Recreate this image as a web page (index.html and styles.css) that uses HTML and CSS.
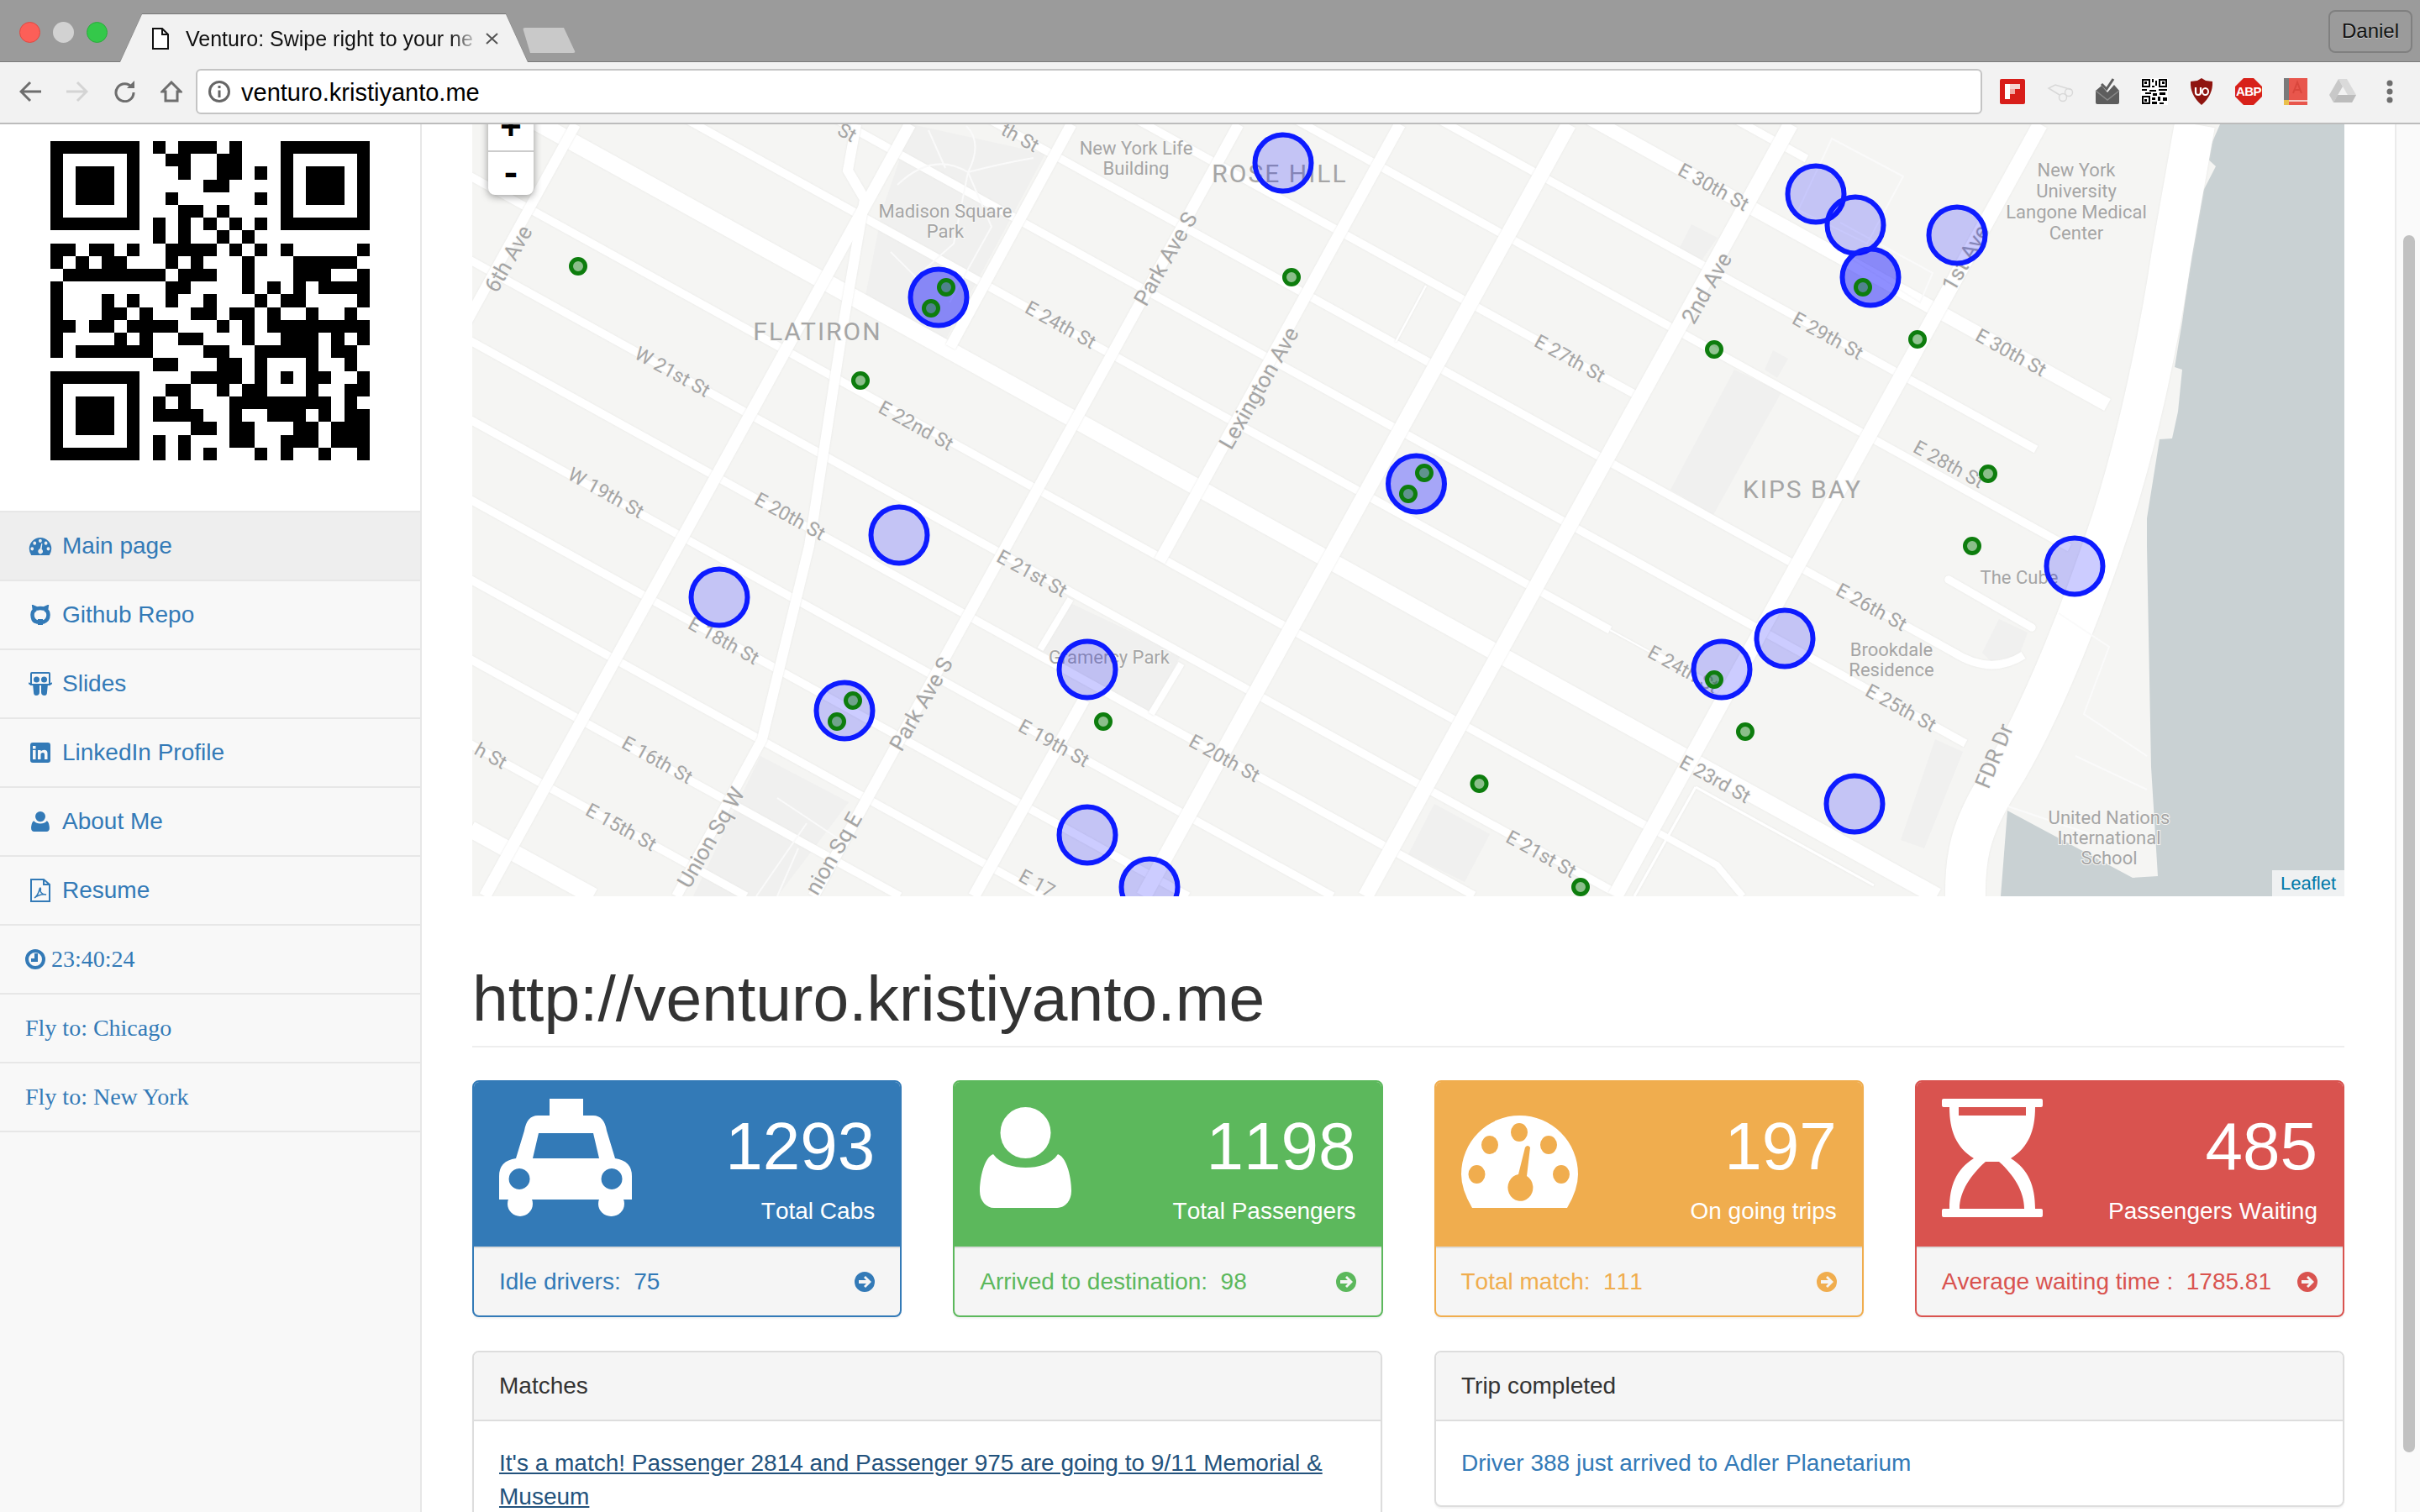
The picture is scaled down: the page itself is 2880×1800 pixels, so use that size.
FILE: index.html
```html
<!DOCTYPE html>
<html lang="en">
<head>
	<meta charset="UTF-8">
	<title>Venturo: Swipe right to your next ride</title>
	<link rel="stylesheet" href="styles.css">
</head>
<body>
<svg class="defs" width="0" height="0">
	<symbol id="i-gauge" viewBox="0 0 139 110">
		<path fill-rule="evenodd" d="M13 110 Q0 88 0 70 A69.500 70 0 0 1 139 70 Q139 88 126 110 Z M59 20 a10 11 0 1 0 20 0 a10 11 0 1 0 -20 0 Z M24 35 a10 11 0 1 0 20 0 a10 11 0 1 0 -20 0 Z M94 35 a10 11 0 1 0 20 0 a10 11 0 1 0 -20 0 Z M8.500 70 a10 11 0 1 0 20 0 a10 11 0 1 0 -20 0 Z M109 70 a10 11 0 1 0 20 0 a10 11 0 1 0 -20 0 Z M76 38 Q79 34 82 38 L78 72 A15 16 0 1 1 68 70 Z"/>
	</symbol>
	<symbol id="i-user" viewBox="0 0 109 120">
		<ellipse cx="54.500" cy="30.500" rx="30" ry="30.500"/>
		<path d="M16 56 C25 68 40 72 54.500 72 C70 72 85 68 93 56 C104 60 109 85 109 100 C109 112 101 120 92 120 H17 C8 120 0 112 0 100 C0 85 5 60 16 56 Z"/>
	</symbol>
	<symbol id="i-arrow" viewBox="0 0 24 24">
		<path fill-rule="evenodd" d="M12 0 A12 12 0 1 1 12 24 A12 12 0 1 1 12 0 Z M13 5 L11 7 L14 10 H5 V14 H14 L11 17 L13 19 L20 12 Z"/>
	</symbol>
</svg>

<header class="tabstrip">
	<div class="lights">
		<span class="light light-red"></span>
		<span class="light light-grey"></span>
		<span class="light light-green"></span>
	</div>
	<div class="tab-edge">
		<div class="tab">
			<svg class="tab-doc" viewBox="0 0 20 26"><path d="M1 1 H12 L19 8 V25 H1 Z M12 1 V8 H19"/></svg>
			<span class="tab-title">Venturo: Swipe right to your ne</span>
			<svg class="tab-close" viewBox="0 0 15 14"><path d="M1 1 L14 13 M14 1 L1 13"/></svg>
		</div>
	</div>
	<div class="newtab"></div>
	<div class="profile">Daniel</div>
</header>

<div class="toolbar">
	<div class="nav-btns">
		<svg class="nav-btn" viewBox="0 0 26 26"><path d="M13 2 L2 13 L13 24 M2 13 H26"/></svg>
		<svg class="nav-btn nav-off" viewBox="0 0 26 26"><path d="M13 2 L24 13 L13 24 M24 13 H0"/></svg>
		<svg class="nav-btn" viewBox="0 0 26 26"><path d="M22 8 A10.500 10.500 0 1 0 24 14"/><path class="solid" d="M16 9 H25 V0 Z"/></svg>
		<svg class="nav-btn" viewBox="0 0 26 26"><path d="M13 2 L24 13 H20 V24 H6 V13 H2 Z"/></svg>
	</div>
	<div class="omnibox">
		<svg class="info" viewBox="0 0 26 26"><circle cx="13" cy="13" r="11.500"/><path d="M13 11.500 V20 M13 6 V9"/></svg>
		<span class="url">venturo.kristiyanto.me</span>
	</div>
	<div class="extensions">
		<svg class="ext" viewBox="0 0 32 32"><rect y="1" width="30" height="30" rx="2" fill="#d81e1a"/><rect x="6" y="7" width="6" height="18" fill="#fff"/><rect x="12" y="7" width="12" height="6" fill="#f5d5d3"/><rect x="12" y="13" width="6" height="6" fill="#f0aaa6"/></svg>
		<svg class="ext" viewBox="0 0 32 32"><g fill="none" stroke="#d8d8d8" stroke-width="1.500"><circle cx="19" cy="23" r="4.500"/><circle cx="26" cy="17" r="4.500"/><path d="M15 20 L2 12 L10 8 L30 14 M22 20 L23 19"/></g></svg>
		<svg class="ext" viewBox="0 0 32 32"><path fill="#5d5d5d" d="M2 15 L9 9 L16 17 L24 8 L30 15 V29 Q30 31 28 31 H4 Q2 31 2 29 Z"/><path fill="none" stroke="#8a8a8a" stroke-width="1.500" d="M2 15 L16 26 L30 15"/><path fill="none" stroke="#5d5d5d" stroke-width="3" d="M9 7 L15 13 L23 1"/></svg>
		<svg class="ext" viewBox="0 0 30 30" shape-rendering="crispEdges"><rect width="30" height="30" fill="#fff"/><path d="M1 1 h9 v9 h-9 z M3 3 v5 h5 v-5 z M20 1 h9 v9 h-9 z M22 3 v5 h5 v-5 z M1 20 h9 v9 h-9 z M3 22 v5 h5 v-5 z" fill-rule="evenodd"/><path d="M4 4 h3 v3 h-3 z M23 4 h3 v3 h-3 z M4 23 h3 v3 h-3 z M12 1 h2 v4 h-2 z M16 3 h2 v5 h-2 z M12 8 h3 v2 h-3 z M1 12 h6 v2 h-6 z M9 13 h8 v2 h-8 z M20 12 h9 v2 h-9 z M5 16 h6 v2 h-6 z M13 17 h5 v3 h-5 z M21 16 h6 v3 h-6 z M12 22 h4 v2 h-4 z M19 21 h3 v4 h-3 z M24 22 h5 v3 h-5 z M12 26 h6 v3 h-6 z M21 27 h4 v2 h-4 z"/></svg>
		<svg class="ext" viewBox="0 0 32 32"><path fill="#8f1510" d="M16 0 L21 3 L29 4 Q30 20 16 32 Q2 20 3 4 L11 3 Z"/><path fill="none" stroke="#fff" stroke-width="2.200" d="M9 11 V17 Q9 20 12 20 Q15 20 15 17 V11"/><ellipse cx="20.500" cy="16" rx="3.500" ry="4" fill="none" stroke="#fff" stroke-width="2"/></svg>
		<svg class="ext" viewBox="0 0 32 32"><path fill="#d8211a" d="M10 0 H22 L32 10 V22 L22 32 H10 L0 22 V10 Z"/><text class="abp" x="16" y="21">ABP</text></svg>
		<svg class="ext" viewBox="0 0 32 32"><rect x="2" width="28" height="32" fill="#e8564c"/><rect x="2" width="6" height="32" fill="#7a7a7a"/><rect x="8" y="26" width="22" height="2" fill="#f6c9c4"/><rect x="2" y="26" width="6" height="6" fill="#e9c04c"/><path d="M13 18 L18 5 L23 18 M15 14 H21" fill="none" stroke="#d9463c" stroke-width="2"/></svg>
		<svg class="ext" viewBox="0 0 32 32"><path fill="#dadada" d="M11 1 H21 L32 20 L27 29 Z" /><path fill="#c8c8c8" d="M11 1 L16 10 L5 29 L0 20 Z"/><path fill="#bcbcbc" d="M10 20 H32 L27 29 H5 Z"/></svg>
		<svg class="ext dots" viewBox="0 0 32 32"><circle cx="16" cy="6" r="3.500"/><circle cx="16" cy="16" r="3.500"/><circle cx="16" cy="26" r="3.500"/></svg>
	</div>
</div>

<div class="page">
	<aside class="sidebar">
		<div class="qr-box">
			<svg class="qr" viewBox="0 0 25 25" shape-rendering="crispEdges">
				<path fill-rule="evenodd" d="M0 0 h7 v7 h-7 z M1 1 v5 h5 v-5 z M18 0 h7 v7 h-7 z M19 1 v5 h5 v-5 z M0 18 h7 v7 h-7 z M1 19 v5 h5 v-5 z"/>
				<path d="M2 2 h3 v3 h-3 z M20 2 h3 v3 h-3 z M2 20 h3 v3 h-3 z"/>
				<path d="M8 0 h1 v1 h-1 z M10 0 h3 v1 h-3 z M14 0 h1 v1 h-1 z
				M9 1 h2 v1 h-2 z M13 1 h2 v1 h-2 z
				M10 2 h1 v1 h-1 z M13 2 h2 v1 h-2 z M16 2 h1 v1 h-1 z
				M12 3 h2 v1 h-2 z
				M9 4 h1 v1 h-1 z M16 4 h1 v1 h-1 z
				M10 5 h2 v1 h-2 z M13 5 h1 v1 h-1 z
				M8 6 h1 v1 h-1 z M10 6 h1 v1 h-1 z M12 6 h1 v1 h-1 z M14 6 h1 v1 h-1 z M16 6 h1 v1 h-1 z
				M8 7 h1 v1 h-1 z M10 7 h1 v1 h-1 z M13 7 h1 v1 h-1 z M15 7 h1 v1 h-1 z
				M0 8 h2 v1 h-2 z M3 8 h2 v1 h-2 z M6 8 h1 v1 h-1 z M9 8 h4 v1 h-4 z M14 8 h1 v1 h-1 z M16 8 h1 v1 h-1 z M18 8 h1 v1 h-1 z M24 8 h1 v1 h-1 z
				M0 9 h1 v1 h-1 z M2 9 h1 v1 h-1 z M4 9 h2 v1 h-2 z M9 9 h1 v1 h-1 z M11 9 h1 v1 h-1 z M15 9 h1 v1 h-1 z M19 9 h5 v1 h-5 z
				M1 10 h8 v1 h-8 z M10 10 h3 v1 h-3 z M15 10 h1 v1 h-1 z M19 10 h3 v1 h-3 z M24 10 h1 v1 h-1 z
				M0 11 h1 v1 h-1 z M9 11 h2 v1 h-2 z M15 11 h1 v1 h-1 z M17 11 h1 v1 h-1 z M19 11 h1 v1 h-1 z M21 11 h4 v1 h-4 z
				M0 12 h1 v1 h-1 z M4 12 h1 v1 h-1 z M6 12 h1 v1 h-1 z M9 12 h1 v1 h-1 z M12 12 h1 v1 h-1 z M16 12 h1 v1 h-1 z M18 12 h2 v1 h-2 z M24 12 h1 v1 h-1 z
				M0 13 h1 v1 h-1 z M4 13 h2 v1 h-2 z M7 13 h1 v1 h-1 z M11 13 h2 v1 h-2 z M14 13 h2 v1 h-2 z M17 13 h1 v1 h-1 z M20 13 h1 v1 h-1 z M23 13 h1 v1 h-1 z
				M0 14 h2 v1 h-2 z M3 14 h2 v1 h-2 z M6 14 h4 v1 h-4 z M13 14 h1 v1 h-1 z M15 14 h1 v1 h-1 z M17 14 h8 v1 h-8 z
				M0 15 h1 v1 h-1 z M5 15 h1 v1 h-1 z M7 15 h1 v1 h-1 z M10 15 h2 v1 h-2 z M15 15 h1 v1 h-1 z M18 15 h3 v1 h-3 z M22 15 h1 v1 h-1 z M24 15 h1 v1 h-1 z
				M0 16 h1 v1 h-1 z M2 16 h6 v1 h-6 z M12 16 h2 v1 h-2 z M16 16 h5 v1 h-5 z M22 16 h2 v1 h-2 z
				M8 17 h2 v1 h-2 z M13 17 h2 v1 h-2 z M16 17 h1 v1 h-1 z M20 17 h1 v1 h-1 z M23 17 h1 v1 h-1 z
				M11 18 h4 v1 h-4 z M16 18 h1 v1 h-1 z M18 18 h1 v1 h-1 z M20 18 h2 v1 h-2 z M24 18 h1 v1 h-1 z
				M9 19 h2 v1 h-2 z M13 19 h1 v1 h-1 z M15 19 h2 v1 h-2 z M20 19 h1 v1 h-1 z M23 19 h2 v1 h-2 z
				M8 20 h1 v1 h-1 z M10 20 h1 v1 h-1 z M14 20 h8 v1 h-8 z M23 20 h1 v1 h-1 z
				M8 21 h4 v1 h-4 z M14 21 h1 v1 h-1 z M17 21 h3 v1 h-3 z M21 21 h1 v1 h-1 z M23 21 h2 v1 h-2 z
				M11 22 h2 v1 h-2 z M14 22 h2 v1 h-2 z M19 22 h2 v1 h-2 z M22 22 h3 v1 h-3 z
				M8 23 h1 v1 h-1 z M10 23 h1 v1 h-1 z M14 23 h2 v1 h-2 z M18 23 h3 v1 h-3 z M22 23 h3 v1 h-3 z
				M8 24 h1 v1 h-1 z M10 24 h1 v1 h-1 z M12 24 h1 v1 h-1 z M16 24 h1 v1 h-1 z M18 24 h1 v1 h-1 z M21 24 h1 v1 h-1 z M24 24 h1 v1 h-1 z"/>
			</svg>
		</div>
		<ul class="side-nav">
			<li class="active"><a href="#"><span class="ico"><svg class="ico-gauge"><use href="#i-gauge"/></svg></span>Main page</a></li>
			<li><a href="#"><span class="ico"><svg class="ico-24" viewBox="0 0 24 24"><path fill="none" stroke="currentColor" stroke-width="4.500" stroke-linecap="round" d="M8.500 20.500 Q2.500 18.500 2.500 12 Q2.500 8 5 6.500 L4.500 3 L8 4.500 Q12 3.500 16 4.500 L19.500 3 L19 6.500 Q21.500 8 21.500 12 Q21.500 18.500 15.500 20.500"/><path d="M9 17 H15 V24 H9 Z M1 17 Q4 20 8 19 V22 Q3 23 1 17 Z"/></svg></span>Github Repo</a></li>
			<li><a href="#"><span class="ico"><svg class="ico-slides" viewBox="0 0 28 28"><path fill="none" stroke="currentColor" stroke-width="2" d="M3 2 Q3 1 4 1 H24 Q25 1 25 2 V15 H3 Z M0 13 L3 15 M28 13 L25 15"/><circle cx="9.500" cy="9" r="3.500"/><circle cx="18.500" cy="9" r="3.500"/><path d="M5 14 H13 V24 Q13 28 9 28 Q6 28 6 24 Z M15 14 H23 L22 24 Q22 28 19 28 Q15 28 15 24 Z"/></svg></span>Slides</a></li>
			<li><a href="#"><span class="ico"><svg class="ico-24" viewBox="0 0 24 24"><path fill-rule="evenodd" d="M3 0 H21 Q24 0 24 3 V21 Q24 24 21 24 H3 Q0 24 0 21 V3 Q0 0 3 0 Z M3 9 V20 H6.500 V9 Z M3 4 V7.500 H6.500 V4 Z M9 9 V20 H12.500 V13.500 Q13 12 15 12 Q17 12 17 14 V20 H20.500 V13 Q20.500 8.800 16.500 8.800 Q14 8.800 12.500 10.500 V9 Z"/></svg></span>LinkedIn Profile</a></li>
			<li><a href="#"><span class="ico"><svg class="ico-user"><use href="#i-user"/></svg></span>About Me</a></li>
			<li><a href="#"><span class="ico"><svg class="ico-pdf" viewBox="0 0 24 28"><path fill="none" stroke="currentColor" stroke-width="2" d="M1 1 H16 L23 7 V27 H1 Z M16 1 V7 H23"/><path fill="none" stroke="currentColor" stroke-width="1.500" d="M5 23 Q9 20 11 13 Q11 11 12 11 Q13 12 12 15 Q14 19 19 19 Q15 18 10 20 Q7 21 5 23 Z"/></svg></span>Resume</a></li>
			<li class="serif"><a href="#"><svg class="ico-clock" viewBox="0 0 24 24"><circle cx="12" cy="12" r="10"/><path d="M13 5 V13 H7"/></svg>23:40:24</a></li>
			<li class="serif"><a href="#">Fly to: Chicago</a></li>
			<li class="serif"><a href="#">Fly to: New York</a></li>
		</ul>
	</aside>

	<main class="content">
		<div class="map">
			<svg class="map-svg" viewBox="562 148 2228 919">
				<rect x="562" y="148" width="2228" height="919" fill="#f5f5f3"/>
				<g class="patches">
					<path d="M1085 148 L1244 183 L1124 407 L1029 357 L1050 250 Z"/>
					<path d="M1272 717 L1405 780 L1370 850 L1240 775 Z"/>
					<path d="M905 900 L1010 955 L925 1067 L825 1067 Z"/>
					<path d="M2064 440 L2120 467 L2039 613 L1988 583 Z"/>
					<path d="M2013 267 L2044 283 L2023 313 L1998 297 Z"/>
					<path d="M2110 417 L2128 427 L2115 450 L2100 440 Z"/>
					<path d="M1707 957 L1773 993 L1743 1050 L1676 1017 Z"/>
					<path d="M2379 737 L2413 753 L2403 780 L2369 787 L2359 777 Z"/>
					<path d="M2303 880 L2336 895 L2290 1010 L2262 1000 Z"/>
				</g>
				<path class="water" d="M2642 148 L2625 187 L2637 198 L2617 237 L2597 383 L2588 437 L2597 440 L2592 490 L2585 522 L2570 523 L2555 617 L2555 650 L2560 913 L2568 1043 L2538 1045 L2389 965 L2381 1067 L2790 1067 L2790 148 Z"/>
				<g class="roads" stroke-width="9.500">
					<path d="M2000 106 L2150 189"/>
					<path stroke-width="16" d="M1800 90 L2508 482"/>
					<path d="M1600 80 L2423 535"/>
					<path d="M1400 64 L2463 652"/>
					<path d="M1200 58 L1952 473"/>
					<path d="M2319 690 L2418 747" stroke-linecap="round"/>
					<path d="M1000 44 L2324 776 Q2369 805 2408 780"/>
					<path d="M800 34 L2339 885"/>
					<path d="M730 94 L1916 750"/>
					<path d="M1967 778 L2054 826"/>
					<path stroke-width="2" d="M1916 750 L1967 778"/>
					<path stroke-width="20" d="M560 102 L2305 1067"/>
					<path d="M560 210 L1966 987"/>
					<path stroke-width="8" d="M1966 987 L2043 1030 L2074 1067"/>
					<path d="M560 310 L1930 1067"/>
					<path d="M560 406 L1754 1066"/>
					<path d="M560 500 L1586 1067"/>
					<path d="M560 595 L1414 1067"/>
					<path d="M560 690 L1242 1067"/>
					<path d="M560 785 L1071 1067"/>
					<path d="M560 886 L888 1067"/>
					<path stroke-width="20" d="M560 987 L706 1067"/>
					<path stroke-width="3" d="M2018 937 L2230 1054 M2018 937 L1945 1067"/>
				</g>
				<g class="roads" stroke-width="14">
					<path stroke-width="12" d="M685 148 L555 384"/>
					<path d="M1083 148 L577 1067"/>
					<path stroke-width="12" d="M1019 148 L1009 203 L1029 237 L1004 383 L963 650 L907 880 L805 1067"/>
					<path stroke-width="13" d="M1275 148 L1131 413"/>
					<path stroke-width="13" d="M1474 148 L968 1067"/>
					<path d="M1666 148 L1380 668"/>
					<path d="M1290 833 L1159 1067"/>
					<path stroke-width="18" d="M1867 148 L1361 1067"/>
					<path stroke-width="18" d="M2131 148 L1625 1067"/>
					<path stroke-width="18" d="M2428 148 L1922 1067"/>
					<path stroke-width="2.500" d="M1697 340 L1661 407"/>
					<path stroke-width="8" d="M1274 713 L1238 773 M1406 790 L1370 850"/>
					<path stroke-width="48" d="M2612 148 L2585 300 C2570 400 2545 520 2513 620 C2480 720 2430 850 2380 930 C2345 985 2338 1020 2339 1070"/>
				</g>
				<g class="roads paths" stroke-width="2">
					<path d="M1068 220 Q1110 180 1152 205 Q1190 195 1230 188 M1152 205 L1135 290 L1090 330 L1060 300 M1152 205 L1180 270 L1130 360 M1105 155 L1125 200 M1152 205 Q1170 170 1150 150"/>
					<path d="M2180 165 L2265 210 L2222 290 L2140 250 Z M2190 265 L2300 325 L2285 360 L2182 295"/>
					<path d="M2390 960 L2508 1000 M2470 900 L2555 940 M2450 730 L2510 770 L2480 850 L2555 900"/>
					<path d="M925 950 L1000 1000 M960 980 L900 1067 M950 1010 L925 1067"/>
				</g>
				<g class="labels street">
					<text x="800" y="443" transform="rotate(29 800 443)">W 21st St</text>
					<text x="1090" y="507" transform="rotate(29 1090 507)">E 22nd St</text>
					<text x="721" y="587" transform="rotate(29 721 587)">W 19th St</text>
					<text x="940" y="615" transform="rotate(29 940 615)">E 20th St</text>
					<text x="1262" y="387" transform="rotate(29 1262 387)">E 24th St</text>
					<text x="1214" y="164" transform="rotate(29 1214 164)">th St</text>
					<text x="1008" y="158" transform="rotate(29 1008 158)">St</text>
					<text x="1868" y="427" transform="rotate(29 1868 427)">E 27th St</text>
					<text x="2039" y="223" transform="rotate(29 2039 223)">E 30th St</text>
					<text x="2175" y="400" transform="rotate(29 2175 400)">E 29th St</text>
					<text x="2393" y="420" transform="rotate(29 2393 420)">E 30th St</text>
					<text x="2319" y="553" transform="rotate(29 2319 553)">E 28th St</text>
					<text x="2227" y="723" transform="rotate(29 2227 723)">E 26th St</text>
					<text x="2262" y="843" transform="rotate(29 2262 843)">E 25th St</text>
					<text x="861" y="763" transform="rotate(29 861 763)">E 18th St</text>
					<text x="1228" y="683" transform="rotate(29 1228 683)">E 21st St</text>
					<text x="1254" y="885" transform="rotate(29 1254 885)">E 19th St</text>
					<text x="782" y="905" transform="rotate(29 782 905)">E 16th St</text>
					<text x="739" y="985" transform="rotate(29 739 985)">E 15th St</text>
					<text x="584" y="900" transform="rotate(29 584 900)">h St</text>
					<text x="1457" y="903" transform="rotate(29 1457 903)">E 20th St</text>
					<text x="1834" y="1017" transform="rotate(29 1834 1017)">E 21st St</text>
					<text x="2003" y="797" transform="rotate(29 2003 797)">E 24th St</text>
					<text x="2041" y="928" transform="rotate(29 2041 928)">E 23rd St</text>
					<text x="1234" y="1052" transform="rotate(29 1234 1052)">E 17</text>
				</g>
				<g class="labels ave">
					<text x="605" y="308" transform="rotate(-60 605 308)">6th Ave</text>
					<text x="1387" y="308" transform="rotate(-60 1387 308)">Park Ave S</text>
					<text x="1498" y="462" transform="rotate(-60 1498 462)">Lexington Ave</text>
					<text x="2031" y="343" transform="rotate(-60 2031 343)">2nd Ave</text>
					<text x="2339" y="307" transform="rotate(-60 2339 307)">1st Ave</text>
					<text x="846" y="997" transform="rotate(-60 846 997)">Union Sq W</text>
					<text x="992" y="1016" transform="rotate(-60 992 1016)">nion Sq E</text>
					<text x="1096" y="838" transform="rotate(-60 1096 838)">Park Ave S</text>
					<text class="fdr" x="2373" y="900" transform="rotate(-68 2373 900)">FDR Dr</text>
				</g>
				<g class="labels poi">
					<text x="1125" y="251">Madison Square</text>
					<text x="1125" y="275">Park</text>
					<text x="1352" y="176">New York Life</text>
					<text x="1352" y="200">Building</text>
					<text x="2471" y="202">New York</text>
					<text x="2471" y="227">University</text>
					<text x="2471" y="252">Langone Medical</text>
					<text x="2471" y="277">Center</text>
					<text x="2403" y="687">The Cube</text>
					<text x="2251" y="773">Brookdale</text>
					<text x="2251" y="797">Residence</text>
					<text x="2510" y="973">United Nations</text>
					<text x="2510" y="997">International</text>
					<text x="2510" y="1021">School</text>
					<text x="1320" y="782">Gramercy Park</text>
				</g>
				<g class="labels hood">
					<text x="973" y="394">FLATIRON</text>
					<text x="1523" y="206">ROSE HILL</text>
					<text x="2145" y="582">KIPS BAY</text>
				</g>
				<g class="zones">
					<circle cx="1527" cy="194" r="33.500"/>
					<circle cx="1070" cy="637" r="33.500"/>
					<circle cx="856" cy="711" r="33.500"/>
					<circle cx="1005" cy="846" r="33.500"/>
					<circle cx="1294" cy="797" r="33.500"/>
					<circle cx="1294" cy="994" r="33.500"/>
					<circle cx="1368" cy="1056" r="33.500"/>
					<circle cx="2049" cy="797" r="33.500"/>
					<circle cx="2124" cy="760" r="33.500"/>
					<circle cx="2207" cy="957" r="33.500"/>
					<circle cx="2469" cy="674" r="33.500"/>
					<circle cx="2161" cy="231" r="33.500"/>
					<circle cx="2208" cy="268" r="33.500"/>
					<circle cx="2329" cy="280" r="33.500"/>
					<circle class="zone-3" cx="1117" cy="354" r="33.500"/>
					<circle class="zone-2" cx="1685.500" cy="576" r="33.500"/>
					<circle class="zone-3" cx="2226" cy="330" r="33.500"/>
				</g>
				<g class="pins">
					<circle cx="1126" cy="342" r="8.500"/>
					<circle cx="1108" cy="367" r="8.500"/>
					<circle cx="1695" cy="563" r="8.500"/>
					<circle cx="1676" cy="588" r="8.500"/>
					<circle cx="1015" cy="834" r="8.500"/>
					<circle cx="996" cy="859" r="8.500"/>
					<circle cx="2040" cy="809" r="8.500"/>
					<circle cx="2217" cy="342" r="8.500"/>
					<circle cx="688" cy="317" r="8.500"/>
					<circle cx="1024" cy="453" r="8.500"/>
					<circle cx="1537" cy="330" r="8.500"/>
					<circle cx="2040" cy="416" r="8.500"/>
					<circle cx="2282" cy="404" r="8.500"/>
					<circle cx="2366" cy="564" r="8.500"/>
					<circle cx="2347" cy="650" r="8.500"/>
					<circle cx="1313" cy="859" r="8.500"/>
					<circle cx="1760.500" cy="933" r="8.500"/>
					<circle cx="2077" cy="871" r="8.500"/>
					<circle cx="1881" cy="1056" r="8.500"/>
				</g>
			</svg>
			<div class="zoom-ctl">
				<a class="zoom-btn" href="#">+</a>
				<a class="zoom-btn" href="#">-</a>
			</div>
			<a class="attribution" href="#">Leaflet</a>
		</div>

		<h1 class="page-title">http://venturo.kristiyanto.me</h1>

		<div class="grid-4">
			<div class="card card-blue">
				<div class="card-head">
					<svg class="big-ico big-taxi" viewBox="0 0 158 140">
						<rect x="10" y="110" width="30" height="30" rx="15"/>
						<rect x="118" y="110" width="31" height="30" rx="15"/>
						<path fill-rule="evenodd" d="M60 0 H100 V20 H112 Q125 20 128 38 L138 71 Q158 74 158 92 V120 H0 V92 Q0 74 20 71 L30 38 Q33 20 46 20 H60 Z M47 41 L40 71 H119 L112 41 Z M24 83 a12.500 12.500 0 1 0 0.100 0 Z M134 83 a12.500 12.500 0 1 0 0.100 0 Z"/>
					</svg>
					<div class="card-nums"><div class="huge">1293</div><div>Total Cabs</div></div>
				</div>
				<a class="card-foot" href="#"><span>Idle drivers:&nbsp; 75</span><svg class="foot-arrow"><use href="#i-arrow"/></svg></a>
			</div>
			<div class="card card-green">
				<div class="card-head">
					<svg class="big-ico big-user"><use href="#i-user"/></svg>
					<div class="card-nums"><div class="huge">1198</div><div>Total Passengers</div></div>
				</div>
				<a class="card-foot" href="#"><span>Arrived to destination:&nbsp; 98</span><svg class="foot-arrow"><use href="#i-arrow"/></svg></a>
			</div>
			<div class="card card-yellow">
				<div class="card-head">
					<svg class="big-ico big-gauge"><use href="#i-gauge"/></svg>
					<div class="card-nums"><div class="huge">197</div><div>On going trips</div></div>
				</div>
				<a class="card-foot" href="#"><span>Total match:&nbsp; 111</span><svg class="foot-arrow"><use href="#i-arrow"/></svg></a>
			</div>
			<div class="card card-red">
				<div class="card-head">
					<svg class="big-ico big-glass" viewBox="0 0 120 141">
						<path fill-rule="evenodd" d="M0 2 Q0 0 2 0 H118 Q120 0 120 2 V8 Q120 10 118 10 H111 C111 38 103 58 82 71 C103 84 111 104 111 131 H118 Q120 131 120 133 V139 Q120 141 118 141 H2 Q0 141 0 139 V133 Q0 131 2 131 H9 C9 104 17 84 38 71 C17 58 9 38 9 10 H2 Q0 10 0 8 Z M20 10 H100 V20 H20 Z M52 75 H68 C85 90 98 110 98 131 H21 C21 110 35 90 52 75 Z"/>
					</svg>
					<div class="card-nums"><div class="huge">485</div><div>Passengers Waiting</div></div>
				</div>
				<a class="card-foot" href="#"><span>Average waiting time :&nbsp; 1785.81</span><svg class="foot-arrow"><use href="#i-arrow"/></svg></a>
			</div>
		</div>

		<div class="grid-2">
			<div class="panel">
				<div class="panel-head">Matches</div>
				<div class="panel-body"><a class="match" href="#">It's a match! Passenger 2814 and Passenger 975 are going to 9/11 Memorial &amp; Museum</a></div>
			</div>
			<div class="panel">
				<div class="panel-head">Trip completed</div>
				<div class="panel-body"><a href="#">Driver 388 just arrived to Adler Planetarium</a></div>
			</div>
		</div>
	</main>

	<div class="scrollbar"><div class="thumb"></div></div>
</div>
</body>
</html>
```

FILE: styles.css
```css
* {
	box-sizing: border-box;
}
html, body {
	height: 100%;
}
body {
	margin: 0;
	display: flex;
	flex-direction: column;
	height: 1800px;
	overflow: hidden;
	font-family: "Liberation Sans", Arial, sans-serif;
	font-size: 28px;
	line-height: 40px;
	color: #333;
	background: #fff;
}
a {
	color: #337ab7;
	text-decoration: none;
}
.defs {
	position: absolute;
}

/* browser chrome */
.tabstrip {
	display: flex;
	align-items: flex-end;
	height: 74px;
	flex: none;
	background: #9b9b9b;
	border-bottom: 1px solid #7a7a7a;
	position: relative;
}
.lights {
	display: flex;
	gap: 15px;
	align-self: flex-start;
	padding: 26px 0 0 23px;
}
.light {
	width: 25px;
	height: 25px;
	border-radius: 50%;
}
.light-red {
	background: #fc5f58;
	border: 1px solid #df4a43;
}
.light-grey {
	background: #d2d2d2;
}
.light-green {
	background: #34c84a;
	border: 1px solid #2aac3c;
}
.tab-edge {
	filter: drop-shadow(0 -1px 0 #777);
	margin-left: 15px;
	margin-bottom: -1px;
}
.tab {
	display: flex;
	align-items: center;
	width: 485px;
	height: 57px;
	padding: 0 32px 0 38px;
	background: #f2f2f2;
	clip-path: polygon(0 100%, 26px 0, 459px 0, 100% 100%);
	font-size: 25px;
	color: #111;
}
.tab-doc {
	width: 20px;
	height: 26px;
	flex: none;
	fill: #fff;
	stroke: #111;
	stroke-width: 2;
	margin-right: 20px;
}
.tab-title {
	width: 350px;
	flex: none;
	white-space: nowrap;
	-webkit-mask-image: linear-gradient(to right, #000 90%, transparent 100%);
	mask-image: linear-gradient(to right, #000 90%, transparent 100%);
}
.tab-close {
	width: 15px;
	height: 14px;
	flex: none;
	margin-left: 7px;
	fill: none;
	stroke: #555;
	stroke-width: 2;
}
.newtab {
	width: 63px;
	height: 30px;
	margin: 0 0 10px -6px;
	background: #c9c9c9;
	clip-path: polygon(0 0, 49px 0, 100% 100%, 9px 100%);
	border-radius: 3px;
}
.profile {
	margin: 0 9px 10px auto;
	width: 100px;
	height: 51px;
	border: 2px solid #808080;
	border-radius: 8px;
	text-align: center;
	font-size: 24px;
	line-height: 46px;
	color: #111;
	text-shadow: 0 1px 0 #c8c8c8;
}
.toolbar {
	display: flex;
	align-items: center;
	height: 74px;
	flex: none;
	background: #f2f2f2;
	border-bottom: 2px solid #bcbcbc;
	padding: 0 20px 2px 23px;
}
.nav-btns {
	display: flex;
	gap: 30px;
	flex: none;
}
.nav-btn {
	width: 26px;
	height: 26px;
	fill: none;
	stroke: #6e6e6e;
	stroke-width: 3;
}
.nav-btn .solid {
	fill: #6e6e6e;
	stroke: none;
}
.nav-off {
	stroke: #d4d4d4;
}
.omnibox {
	flex: 1;
	display: flex;
	align-items: center;
	height: 54px;
	margin: 0 21px 0 16px;
	padding-left: 13px;
	background: #fff;
	border: 2px solid #c4c4c4;
	border-radius: 6px;
}
.info {
	width: 26px;
	height: 26px;
	flex: none;
	fill: none;
	stroke: #666;
	stroke-width: 3;
}
.url {
	margin-left: 13px;
	padding-top: 2px;
	font-size: 29px;
	color: #000;
}
.extensions {
	display: flex;
	gap: 24px;
	flex: none;
}
.ext {
	width: 32px;
	height: 32px;
}
.dots {
	fill: #6e6e6e;
}
.abp {
	font: bold 15px "Liberation Sans", Arial, sans-serif;
	fill: #fff;
	text-anchor: middle;
	letter-spacing: -0.5px;
}

/* page area */
.page {
	flex: 1;
	display: flex;
	min-height: 0;
	overflow: hidden;
}
.sidebar {
	width: 502px;
	flex: none;
	background: #f8f8f8;
	border-right: 2px solid #e7e7e7;
}
.qr-box {
	height: 462px;
	padding-top: 20px;
	background: #fff;
	border-bottom: 2px solid #e7e7e7;
	text-align: center;
}
.qr {
	display: block;
	width: 380px;
	height: 380px;
	margin: 0 auto;
}
.side-nav {
	list-style: none;
	margin: 0;
	padding: 0;
}
.side-nav li {
	border-bottom: 2px solid #e7e7e7;
}
.side-nav a {
	display: flex;
	align-items: center;
	height: 80px;
	padding: 0 30px;
}
.side-nav .active {
	background: #eee;
}
.side-nav .serif {
	font-family: "Liberation Serif", "Times New Roman", serif;
}
.ico {
	display: flex;
	justify-content: center;
	align-items: center;
	width: 36px;
	margin-right: 8px;
	flex: none;
	fill: currentColor;
}
.ico-gauge {
	width: 28px;
	height: 21px;
}
.ico-24 {
	width: 24px;
	height: 24px;
}
.ico-slides {
	width: 28px;
	height: 28px;
}
.ico-user {
	width: 22px;
	height: 24px;
}
.ico-pdf {
	width: 24px;
	height: 28px;
}
.ico-clock {
	width: 24px;
	height: 24px;
	margin-right: 7px;
	fill: none;
	stroke: currentColor;
	stroke-width: 4;
}

.content {
	flex: 1;
	min-width: 0;
	padding: 0 60px;
}
.map {
	position: relative;
	height: 919px;
	overflow: hidden;
}
.map-svg {
	display: block;
	width: 2228px;
	height: 919px;
}
.patches {
	fill: #f0f0ef;
}
.water {
	fill: #c9d1d3;
}
.roads {
	fill: none;
	stroke: #fff;
	filter: drop-shadow(0 0 1px #e6e6e4);
}
.paths {
	stroke: #fafafa;
	filter: none;
}
.labels text {
	font-family: Roboto, "Liberation Sans", sans-serif;
	text-anchor: middle;
	dominant-baseline: central;
	fill: #a5a5a5;
	paint-order: stroke;
	stroke: #f7f7f5;
	stroke-width: 2px;
}
.street {
	font-size: 23px;
}
.ave {
	font-size: 26px;
}
.poi {
	font-size: 22px;
}
.hood {
	font-size: 30px;
	letter-spacing: 2px;
}
.zones circle {
	fill: #0000ff;
	fill-opacity: 0.2;
	stroke: #0d1bff;
	stroke-width: 6;
}
.zones .zone-2 {
	fill-opacity: 0.32;
}
.zones .zone-3 {
	fill-opacity: 0.44;
}
.pins circle {
	fill: #0a7d0a;
	fill-opacity: 0.45;
	stroke: #0d7d0d;
	stroke-width: 5;
}
.zoom-ctl {
	position: absolute;
	top: -21px;
	left: 19px;
	width: 54px;
	background: #fff;
	border-radius: 8px;
	box-shadow: 0 2px 10px rgba(0, 0, 0, 0.4);
}
.zoom-btn {
	display: block;
	height: 52px;
	text-align: center;
	font: bold 44px/55px "Liberation Mono", monospace;
	color: #000;
}
.zoom-btn + .zoom-btn {
	height: 53px;
	border-top: 2px solid #ccc;
}
.attribution {
	position: absolute;
	right: 0;
	bottom: 0;
	padding: 0 10px;
	height: 31px;
	background: rgba(255, 255, 255, 0.7);
	font-size: 22px;
	line-height: 31px;
	color: #0078a8;
}
.page-title {
	margin: 80px 0 39px;
	padding-bottom: 16px;
	border-bottom: 2px solid #eee;
	font-size: 76.800px;
	font-weight: 400;
	line-height: 82px;
	color: #333;
}

.grid-4, .grid-2 {
	display: grid;
}
.grid-4 {
	grid-template-columns: repeat(4, 1fr);
	gap: 61px;
}
.grid-2 {
	grid-template-columns: repeat(2, 1fr);
	gap: 62px;
	align-items: start;
	margin-top: 40px;
}
.card {
	border: 2px solid var(--c);
	border-radius: 8px;
	background: #f5f5f5;
	box-shadow: 0 2px 2px rgba(0, 0, 0, 0.05);
	overflow: hidden;
	font-kerning: none;
}
.card-blue {
	--c: #337ab7;
}
.card-green {
	--c: #5cb85c;
}
.card-yellow {
	--c: #f0ad4e;
}
.card-red {
	--c: #d9534f;
}
.card-head {
	display: flex;
	justify-content: space-between;
	height: 196px;
	padding: 20px 30px;
	background: var(--c);
	color: #fff;
}
.big-ico {
	fill: #fff;
	flex: none;
}
.big-taxi {
	width: 158px;
	height: 140px;
}
.big-user {
	width: 109px;
	height: 120px;
	margin-top: 10px;
}
.big-gauge {
	width: 139px;
	height: 110px;
	margin-top: 20px;
}
.big-glass {
	width: 120px;
	height: 141px;
}
.card-nums {
	text-align: right;
}
.huge {
	font-size: 80px;
	line-height: 114px;
}
.card-foot {
	display: flex;
	justify-content: space-between;
	align-items: center;
	height: 82px;
	padding: 0 30px;
	border-top: 2px solid #ddd;
	color: var(--c);
}
.foot-arrow {
	width: 24px;
	height: 24px;
	fill: var(--c);
}
.panel {
	border: 2px solid #ddd;
	border-radius: 8px;
	box-shadow: 0 2px 2px rgba(0, 0, 0, 0.05);
	background: #fff;
}
.panel-head {
	height: 82px;
	padding: 20px 30px;
	background: #f5f5f5;
	border-bottom: 2px solid #ddd;
	border-radius: 6px 6px 0 0;
}
.panel-body {
	padding: 30px;
	font-kerning: none;
}
.match {
	color: #23527c;
	text-decoration: underline;
}

.scrollbar {
	width: 30px;
	flex: none;
	padding: 132px 6px 0 8px;
	background: #fafafa;
	border-left: 2px solid #ebebeb;
}
.thumb {
	height: 1449px;
	background: #c1c1c1;
	border-radius: 8px;
}
```
